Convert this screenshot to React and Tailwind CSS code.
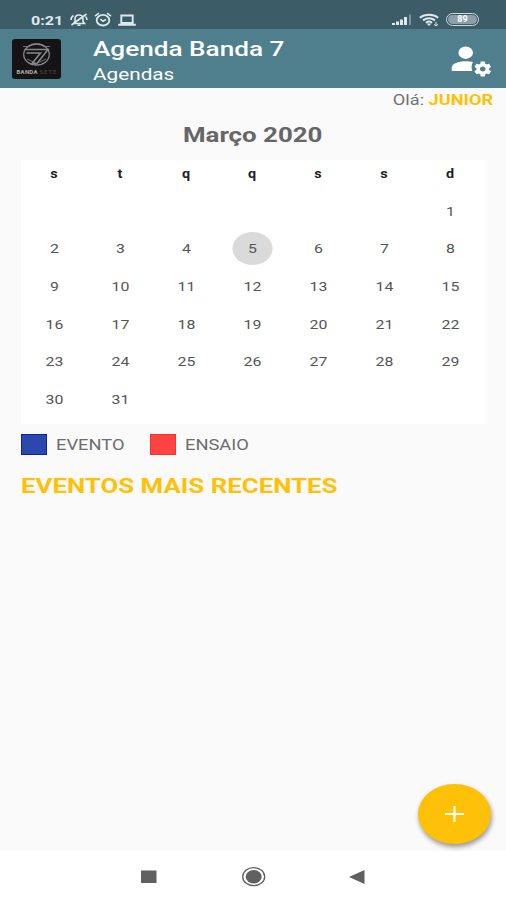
import clsx from 'clsx'

const weekdays = ['s', 't', 'q', 'q', 's', 's', 'd']
const today = 5

// March 2020 starts on a sunday, the week starts on monday
const days = [...Array(6).fill(null), ...Array.from({ length: 31 }, (_, i) => i + 1)]

function StatusBar() {
  return (
    <div className="flex h-[29px] items-center justify-between bg-[#3c5c68] pt-[10px] pr-[27px] pl-[31px] text-[#dfe8eb]">
      <div className="flex items-center">
        <span className="w-[39px] pt-px text-[13px] leading-none font-bold">
          <span className="inline-block origin-left scale-x-[1.24]">0:21</span>
        </span>
        {/* Muted bell */}
        <svg className="h-[15px] w-[18px]" viewBox="0 0 18 15" fill="none" stroke="currentColor" strokeWidth="1.6">
          <path d="M3.500 11.500h11L13 9.500V7c0-2.500-1.500-4-4-4S5 4.500 5 7v2.500zM7.500 13.300h3M1.500 13L16.500 2M1 8c0-2 .8-3.500 2.500-4.500M17 8c0-1.500-.5-2.500-1.500-3.500" />
        </svg>
        {/* Alarm */}
        <svg className="ml-[6px] h-[15px] w-[18px]" viewBox="0 0 18 15" fill="none" stroke="currentColor" strokeWidth="1.8">
          <ellipse cx="9" cy="8.200" rx="6.300" ry="5.300" />
          <path d="M6.300 7L9 9.200l3-1.700M1 4.200l4-3M17 4.200l-4-3" strokeWidth="1.600" />
        </svg>
        {/* Laptop */}
        <svg className="ml-[6px] h-[14px] w-[18px]" viewBox="0 0 18 14" fill="none" stroke="currentColor" strokeWidth="1.9">
          <path d="M3.300 2.500h11.400v7.500H3.300zM.2 11.700h17.600" />
        </svg>
      </div>
      <div className="flex items-center">
        {/* Signal */}
        <svg className="h-[13px] w-[20px]" viewBox="0 0 20 13" fill="currentColor">
          <path d="M0 10h3v2H0zM4 8.500h3V12H4zM8 6.500h3V12H8zM12 4h3v8h-3z" />
          <path d="M17 1.500h2V12h-2z" opacity=".4" />
        </svg>
        {/* Wifi */}
        <svg className="ml-[7px] h-[14px] w-[21px]" viewBox="0 0 21 14" fill="none" stroke="currentColor" strokeWidth="2">
          <path d="M.8 4.800C6 .8 14 .8 19.200 4.800M4 7.300c4-2.700 8-2.700 12 0M7 9.700c2-1.500 4-1.500 6 0" />
          <path d="M7.500 10.500l2.500 2.500 2.500-2.500z" fill="currentColor" stroke="none" />
          <path d="M17 9v4M15 11.300l2 1.700 2-1.700" strokeWidth="1" />
        </svg>
        <span className="ml-[6px] flex h-[13px] w-[33px] items-center justify-center rounded-full border-[1.5px] border-[#cbd8dc] p-px">
          <span className="flex h-full w-full items-center justify-center rounded-full bg-[#8ba0a8] text-[9px] leading-none font-bold text-white">
            89
          </span>
        </span>
      </div>
    </div>
  )
}

function Logo() {
  return (
    <div className="h-[40px] w-[49px] rounded-[3px] bg-[#151314]">
      <svg className="h-full w-full" viewBox="0 0 49 40" fill="none" stroke="#85888a">
        <ellipse cx="24.500" cy="15.500" rx="12.800" ry="10.500" strokeWidth="1.300" />
        <path d="M11 7.500h6l4-2.500h7l4 2.500h6M15 20l9.500 4.500L34 20" strokeWidth=".8" />
        <path d="M13 10.500h23L25 24.500h-5l8.500-10.500H14.500" strokeWidth="1.600" />
        <text x="4.500" y="35" fill="#b0b0b0" stroke="none" fontSize="6" fontWeight="700" textLength="21">BANDA</text>
        <text x="27.500" y="35" fill="#4b4a4b" stroke="none" fontSize="6" textLength="17">SETE</text>
      </svg>
    </div>
  )
}

function Header() {
  return (
    <header className="flex h-[59px] bg-[#4f7e8d] pl-[12px] text-white">
      <div className="pt-[10px]">
        <Logo />
      </div>
      <div className="ml-[32px] flex-1 pt-[7px]">
        <h1 className="w-max origin-left scale-x-[1.245] text-[21px] leading-[26px] font-medium">Agenda Banda 7</h1>
        <p className="w-max origin-left scale-x-[1.22] text-[17px] leading-[24px]">Agendas</p>
      </div>
      {/* User settings */}
      <svg className="mt-[16px] mr-[13px] h-[34px] w-[42px]" viewBox="0 0 42 34" fill="currentColor">
        <ellipse cx="14.700" cy="7.700" rx="7.300" ry="6.200" />
        <path d="M.7 26v-3.500c0-4 7-6.300 14-6.300 2.700 0 5.300.3 7.300.9-1.600 2.400-1.900 6-.7 8.900z" />
        <path
          transform="translate(21.200 14.600) scale(.88 .78)"
          d="M19.140 12.940c.04-.3.06-.61.06-.94 0-.32-.02-.64-.07-.94l2.030-1.580c.18-.14.23-.41.12-.61l-1.920-3.320c-.12-.22-.37-.29-.59-.22l-2.390.96c-.5-.38-1.030-.7-1.620-.94l-.36-2.540c-.04-.24-.24-.41-.48-.41h-3.840c-.24 0-.43.17-.47.41l-.36 2.540c-.59.24-1.130.57-1.620.94l-2.390-.96c-.22-.08-.47 0-.59.22L2.740 8.870c-.12.21-.08.47.12.61l2.030 1.580c-.05.3-.09.63-.09.94s.02.64.07.94l-2.030 1.580c-.18.14-.23.41-.12.61l1.920 3.320c.12.22.37.29.59.22l2.390-.96c.5.38 1.030.7 1.620.94l.36 2.540c.05.24.24.41.48.41h3.840c.24 0 .44-.17.47-.41l.36-2.540c.59-.24 1.130-.56 1.620-.94l2.390.96c.22.08.47 0 .59-.22l1.920-3.320c.12-.22.07-.47-.12-.61l-2.010-1.580zM12 15.200c-1.770 0-3.200-1.430-3.200-3.200s1.430-3.200 3.200-3.200 3.200 1.430 3.200 3.200-1.430 3.200-3.200 3.200z"
        />
      </svg>
    </header>
  )
}

function Calendar() {
  return (
    <div className="mr-[20px] ml-[21px] mt-[9px] h-[264px] bg-white pr-[3px]">
      <div className="grid h-[32px] grid-cols-7 text-center text-[12px] leading-[28px] font-bold text-[#222]">
        {weekdays.map((day, i) => (
          <span key={i} className="scale-x-[1.2]">{day}</span>
        ))}
      </div>
      <div className="grid auto-rows-[37.7px] grid-cols-7 text-[13px] text-[#555]">
        {days.map((day, i) => (
          <div key={i} className="flex items-center justify-center">
            <span
              className={clsx(
                'flex h-[33px] w-[33px] scale-x-[1.22] items-center justify-center rounded-full pt-px',
                day === today && 'bg-[#dadada]'
              )}
            >
              {day}
            </span>
          </div>
        ))}
      </div>
    </div>
  )
}

export default function App() {
  return (
    <div className="flex h-[900px] w-[506px] flex-col overflow-hidden bg-[#fafafa] font-['Roboto',sans-serif]">
      <StatusBar />
      <Header />

      <main className="relative flex-1">
        <div className="flex h-[23px] justify-end pr-[13px] text-[14px] leading-[24px] text-[#737373]">
          <p className="origin-right scale-x-[1.3]">
            Olá: <span className="font-bold text-[#ffc107]">JUNIOR</span>
          </p>
        </div>
        <h2 className="mx-auto mt-[9px] w-max scale-x-[1.23] text-[21px] leading-[30px] font-bold text-[#666]">Março 2020</h2>

        <div className="pt-px">
          <Calendar />
        </div>

        {/* Legend */}
        <div className="mt-[10px] flex h-[21px] items-center pl-[21px] text-[15px] text-[#6d6d6d]">
          <span className="h-[21px] w-[26px] border border-[#10239e] bg-[#2c47ad]" />
          <span className="ml-[9px] w-[94px] pt-[2px]">
            <span className="inline-block origin-left scale-x-[1.22]">EVENTO</span>
          </span>
          <span className="h-[21px] w-[26px] border border-[#fb3131] bg-[#ff4242]" />
          <span className="ml-[9px] inline-block origin-left scale-x-[1.22] pt-[2px]">ENSAIO</span>
        </div>

        <h3 className="mt-[16px] ml-[21px] w-max origin-left scale-x-[1.23] text-[21px] leading-[30px] font-bold text-[#ffc107]">
          EVENTOS MAIS RECENTES
        </h3>

        {/* Add event */}
        <button className="absolute right-[15px] bottom-[7px] flex h-[60px] w-[73px] items-center justify-center rounded-[50%] bg-[#ffc107] shadow-[1px_3px_5px_rgba(0,0,0,0.4)]">
          <svg className="h-[16px] w-[19px]" viewBox="0 0 19 16" stroke="white" strokeWidth="2">
            <path d="M0 8h19M9.500 0v16" />
          </svg>
        </button>
      </main>

      {/* Android navigation */}
      <nav className="h-[49px] bg-white">
        <svg className="h-full w-full" viewBox="0 0 506 49" fill="#606060">
          <path d="M141 19.500h15.500V32H141zM349 26l15.500-7v14z" />
          <ellipse cx="253.700" cy="25.700" rx="11" ry="9" fill="none" stroke="#606060" strokeWidth="1.300" />
          <ellipse cx="253.700" cy="25.700" rx="8" ry="6.700" />
        </svg>
      </nav>
    </div>
  )
}
